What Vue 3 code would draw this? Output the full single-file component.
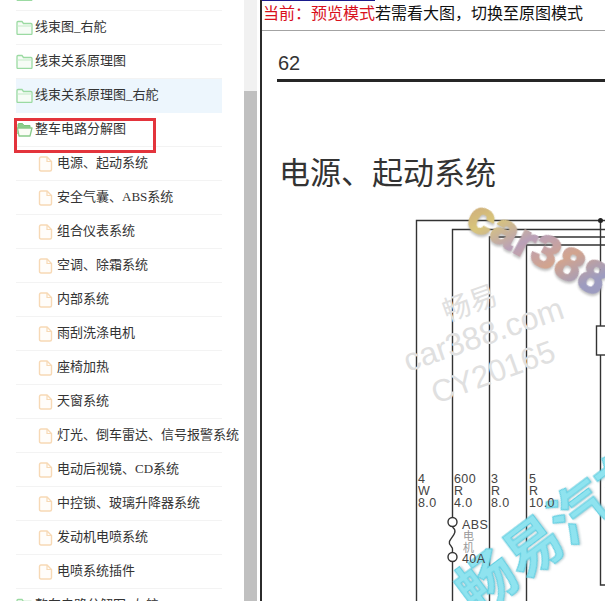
<template>
  <div class="page">
    <aside class="side">
      <div class="scroller">
        <ul class="tree">
          <li
            v-for="row in rows"
            :key="row.name"
            class="row"
            :class="{ child: row.type === 'file', active: row.active }"
          >
            <svg v-if="row.type === 'folder'" class="ico" width="17" height="15" viewBox="0 0 17 15">
              <path d="M1 13.5V2.5Q1 1.5 2 1.5H6L7.5 3.5H15Q16 3.5 16 4.5V13.5Q16 14.5 15 14.5H2Q1 14.5 1 13.5Z" fill="#f6fcf6" stroke="#9bdaa2" stroke-width="1.3" />
              <path d="M1 6H16" stroke="#c3eac6" stroke-width="1" />
            </svg>
            <svg v-else-if="row.type === 'open'" class="ico" width="17" height="15" viewBox="0 0 17 15">
              <path d="M2 12V2.5Q2 1.5 3 1.5H6.5L8 3.5H14V6H4Z" fill="#8ccd8c" stroke="#7cc47c" stroke-width="1" />
              <path d="M1.5 6H16L14 14H3Z" fill="#fbfdf6" stroke="#8bcb8b" stroke-width="1.3" stroke-linejoin="round" />
            </svg>
            <svg v-else class="ico" width="15" height="16" viewBox="0 0 15 16">
              <path d="M1.5 2.5Q1.5 1 3 1H9L13.5 5.5V13.5Q13.5 15 12 15H3Q1.5 15 1.5 13.5Z" fill="#fffdfa" stroke="#f7d9b5" stroke-width="1.4" />
              <path d="M9 1V5.5H13.5" fill="none" stroke="#f7d9b5" stroke-width="1.2" />
            </svg>
            <span class="label">{{ row.name }}</span>
          </li>
        </ul>
        <div class="mark"></div>
      </div>
      <div class="bar"><div class="thumb"></div></div>
    </aside>

    <main class="view">
      <p class="mode"><span class="cur">当前：预览模式</span>若需看大图，切换至原图模式</p>
      <svg class="sheet" width="343" height="570" viewBox="262 31 343 570">
        <defs>
          <linearGradient id="rainbow" x1="0" y1="0" x2="1" y2="0.25">
            <stop offset="0" stop-color="#c9a27e" />
            <stop offset="0.25" stop-color="#d9c67a" />
            <stop offset="0.5" stop-color="#b9a0b8" />
            <stop offset="0.75" stop-color="#d2a48e" />
            <stop offset="1" stop-color="#9d9cc0" />
          </linearGradient>
        </defs>
        <text x="278" y="70" class="pageno">62</text>
        <rect x="277" y="79" width="328" height="3" fill="#262626" />
        <text x="279" y="184" class="title">电源、起动系统</text>

        <g fill="none" stroke="#333" stroke-width="1.4">
          <path d="M416.5 601V220.5H605" />
          <path d="M452.5 517V229.5H605" />
          <path d="M452.5 562V601" />
          <path d="M489.5 601V237H605" />
          <path d="M526.5 601V245H605" />
          <path d="M600.5 220V326M600.5 355V585H605" />
          <rect x="596.5" y="326" width="12" height="29" />
          <circle cx="452.5" cy="522" r="4.5" fill="#fff" />
          <circle cx="452.5" cy="557" r="4.5" fill="#fff" />
          <path d="M452.5 527C461 534 444 540 451 546C454 549 452 551 452.5 552" />
        </g>
        <circle cx="600.5" cy="220.5" r="2.5" fill="#222" />

        <g class="ghost">
          <text transform="translate(447 322) rotate(-20)" font-size="28">畅易</text>
          <text transform="translate(408 372) rotate(-19)" font-size="32">car388.com</text>
          <text transform="translate(436 404) rotate(-20)" font-size="31">CY20165</text>
        </g>
        <text transform="translate(464 226) rotate(28)" class="logo" fill="url(#rainbow)" stroke="url(#rainbow)">car388</text>
        <text transform="translate(476 616) rotate(-37)" class="cyan">畅易汽车</text>

        <g class="wire">
          <text x="418" y="483">4</text><text x="418" y="495">W</text><text x="418" y="507">8.0</text>
          <text x="454" y="483">600</text><text x="454" y="495">R</text><text x="454" y="507">4.0</text>
          <text x="491" y="483">3</text><text x="491" y="495">R</text><text x="491" y="507">8.0</text>
          <text x="529" y="483">5</text><text x="529" y="495">R</text><text x="529" y="507">10.0</text>
          <text x="462" y="529">ABS</text>
          <text x="463" y="540" class="small">电</text>
          <text x="463" y="552" class="small">机</text>
          <text x="462" y="563">40A</text>
        </g>
      </svg>
    </main>
  </div>
</template>

<script setup>
const names = [
  ['线束图', 'folder'],
  ['线束图_右舵', 'folder'],
  ['线束关系原理图', 'folder'],
  ['线束关系原理图_右舵', 'folder', true],
  ['整车电路分解图', 'open'],
  ['电源、起动系统', 'file'],
  ['安全气囊、ABS系统', 'file'],
  ['组合仪表系统', 'file'],
  ['空调、除霜系统', 'file'],
  ['内部系统', 'file'],
  ['雨刮洗涤电机', 'file'],
  ['座椅加热', 'file'],
  ['天窗系统', 'file'],
  ['灯光、倒车雷达、信号报警系统', 'file'],
  ['电动后视镜、CD系统', 'file'],
  ['中控锁、玻璃升降器系统', 'file'],
  ['发动机电喷系统', 'file'],
  ['电喷系统插件', 'file'],
  ['整车电路分解图_左舵', 'folder']
]

const rows = names.map(([name, type, active]) => ({ name, type, active }))
</script>

<style>
html,
body {
  margin: 0;
  overflow: hidden;
  background: #fff;
}
</style>

<style scoped>
.page {
  display: flex;
  width: 605px;
  height: 601px;
  overflow: hidden;
  font-family: "Noto Sans CJK SC", "Liberation Sans", sans-serif;
  color: #333;
}
.side {
  display: flex;
  flex: none;
  width: 260px;
}
.scroller {
  position: relative;
  width: 244px;
  height: 601px;
  overflow: hidden;
}
.tree {
  margin: -23px 0 0;
  padding: 0 0 0 16px;
  width: 206px;
  list-style: none;
}
.row {
  display: flex;
  align-items: center;
  gap: 2px;
  height: 34px;
  box-sizing: border-box;
  border-bottom: 1px solid #f3f3f3;
  font-size: 13px;
  white-space: nowrap;
}
.row.child {
  padding-left: 22px;
  gap: 4px;
}
.row.active {
  background: #edf6fd;
  border-bottom-color: #edf6fd;
}
.ico {
  flex: none;
}
.label {
  padding-bottom: 4px;
  font-family: "Liberation Serif", "Noto Sans CJK SC", sans-serif;
}
.mark {
  position: absolute;
  left: 14px;
  top: 118px;
  width: 142px;
  height: 35px;
  box-sizing: border-box;
  border: 3px solid #e3343c;
}
.bar {
  width: 13px;
  height: 601px;
  margin-right: 3px;
  background: #f1f1f1;
}
.thumb {
  margin-top: 91px;
  height: 510px;
  background: #c0c0c0;
}
.view {
  flex: 1;
  min-width: 0;
  border-left: 2px solid #2b2b2b;
}
.mode {
  box-sizing: border-box;
  height: 31px;
  margin: 0;
  padding-left: 1px;
  border-bottom: 1px solid #a3a3a3;
  background: linear-gradient(#1a1a8c, #1a1a8c) no-repeat 0 0 / 113px 1px;
  font-size: 16px;
  line-height: 24px;
  color: #111;
  white-space: nowrap;
}
.cur {
  color: #d8101c;
}
.sheet {
  display: block;
}
.pageno {
  font-family: "Liberation Sans", sans-serif;
  font-size: 20px;
  fill: #333;
}
.title {
  font-size: 31px;
  fill: #333;
}
.wire text {
  font-family: "Liberation Sans", sans-serif;
  font-size: 12.5px;
  letter-spacing: 0.4px;
  fill: #444;
}
.wire .small {
  font-family: "Noto Sans CJK SC", sans-serif;
  font-size: 11px;
  fill: #999;
}
.ghost text {
  font-family: "Liberation Sans", "Noto Sans CJK SC", sans-serif;
  fill: #e0e0e0;
}
.logo {
  font-family: "Liberation Sans", sans-serif;
  font-size: 46px;
  font-weight: 700;
  letter-spacing: 1px;
  stroke-width: 2px;
  filter: drop-shadow(1px 2px 1px rgba(120, 120, 120, 0.45));
}
.cyan {
  font-size: 58px;
  font-weight: 700;
  fill: #8fe3ef;
  stroke: #62cfe2;
  stroke-width: 1px;
  filter: drop-shadow(1px 1px 1px rgba(90, 130, 140, 0.4));
}
</style>
